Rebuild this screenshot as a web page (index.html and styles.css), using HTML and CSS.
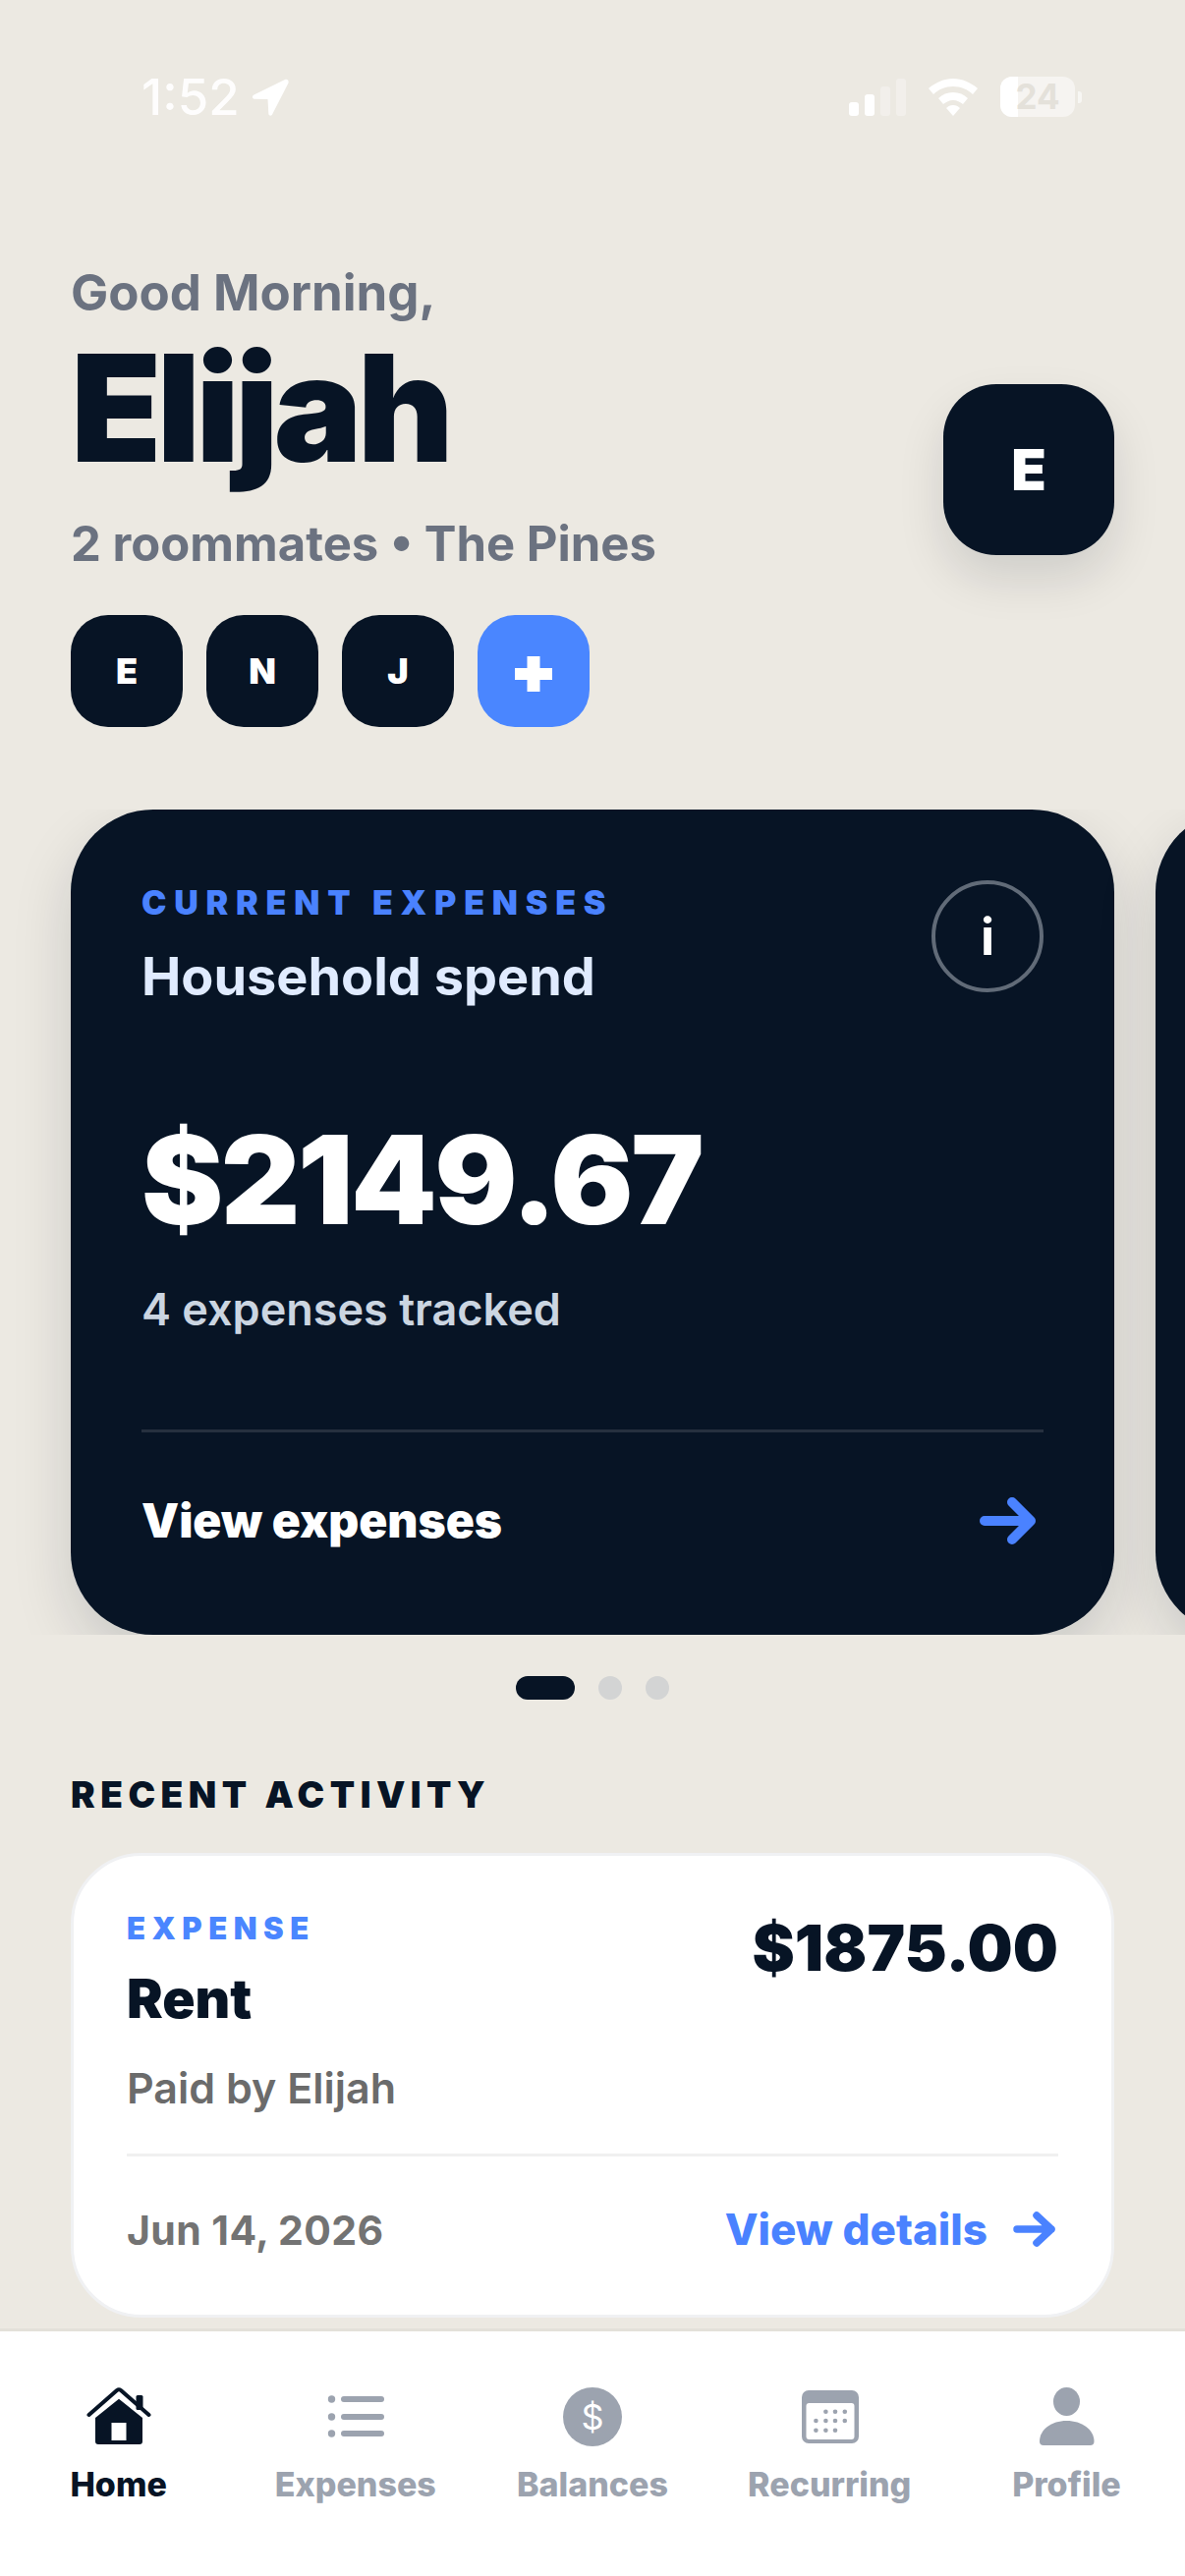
FILE: index.html
```html
<!DOCTYPE html>
<html lang="en">
<head>
<meta charset="utf-8">
<title>Home</title>
<link rel="stylesheet" href="styles.css">
</head>
<body>
<div class="app">
  <div class="status">
    <div class="status-left">
      <span class="time">1:52</span>
      <svg class="loc" viewBox="0 0 40 40"><path d="M35 2 3.500 17.500c-2.500 1.200-1.800 4.300.8 4.300l13.200.2.800 14.500c.1 2.600 3.300 3 4 .6L38.500 5.500c.8-2.400-1.300-4.400-3.500-3.500z" fill="#fff"/></svg>
    </div>
    <div class="status-right">
      <svg class="signal" viewBox="0 0 58 38"><rect x="0" y="24" width="10" height="14" rx="3" fill="#fff"/><rect x="16" y="16" width="10" height="22" rx="3" fill="#fff"/><rect x="32" y="8" width="10" height="30" rx="3" fill="#fff" opacity=".3"/><rect x="48" y="0" width="10" height="38" rx="3" fill="#fff" opacity=".3"/></svg>
      <svg class="wifi" viewBox="0 0 50 38"><path d="M25 0c9 0 18 4 25 10l-5 6c-5-5-12-8-20-8S10 11 5 16L0 10C7 4 16 0 25 0zM25 14c6 0 11 2 15 6l-5 6c-3-2-6-4-10-4s-7 2-10 4l-5-6c4-4 9-6 15-6zM25 27c3 0 5 1 7 3l-7 8-7-8c2-2 4-3 7-3z" fill="#fff"/></svg>
      <div class="battery"><div class="battery-fill"></div><span class="battery-num">24</span></div>
      <div class="battery-cap"></div>
    </div>
  </div>

  <main class="main">
    <header class="head">
      <div class="head-text">
        <div class="greet">Good Morning,</div>
        <h1 class="name">Elijah</h1>
        <div class="sub">2 roommates • The Pines</div>
        <div class="mates">
          <div class="mate">E</div>
          <div class="mate">N</div>
          <div class="mate">J</div>
          <div class="mate mate-add">
            <svg class="plus" viewBox="0 0 38 36"><path d="M12.500 0h13v12h12.500v12H25.500v12h-13V24H0V12h12.500z" fill="#fff"/></svg>
          </div>
        </div>
      </div>
      <div class="me">E</div>
    </header>

    <section class="carousel">
      <article class="hero">
        <div class="hero-top">
          <div>
            <div class="eyebrow">CURRENT EXPENSES</div>
            <div class="hero-title">Household spend</div>
          </div>
          <div class="info">i</div>
        </div>
        <div class="hero-amount">$2149.67</div>
        <div class="hero-note">4 expenses tracked</div>
        <div class="hero-foot">
          <span class="hero-link">View expenses</span>
          <svg class="arrow-lg" viewBox="0 0 58 48"><path d="M5 24h47M33 5l19 19-19 19" fill="none" stroke="#4a82ff" stroke-width="10" stroke-linecap="round" stroke-linejoin="round"/></svg>
        </div>
      </article>
      <article class="hero hero-next"></article>
    </section>

    <div class="dots"><span class="dot dot-on"></span><span class="dot"></span><span class="dot"></span></div>

    <h2 class="recent">RECENT ACTIVITY</h2>
    <article class="item">
      <div class="item-top">
        <div>
          <div class="item-tag">EXPENSE</div>
          <div class="item-title">Rent</div>
        </div>
        <div class="item-amount">$1875.00</div>
      </div>
      <div class="item-by">Paid by Elijah</div>
      <div class="item-foot">
        <span class="item-date">Jun 14, 2026</span>
        <span class="item-link">View details
          <svg class="arrow-sm" viewBox="0 0 44 36"><path d="M4 18h35M24 4l15 14-15 14" fill="none" stroke="#4a82ff" stroke-width="7.500" stroke-linecap="round" stroke-linejoin="round"/></svg>
        </span>
      </div>
    </article>
  </main>

  <nav class="tabs">
    <div class="tab tab-on">
      <svg class="tab-icon" viewBox="0 0 70 60"><path d="M4.500 28 33 3q2-1.500 4 0L65.500 28" fill="none" stroke="#071425" stroke-width="4" stroke-linecap="round" stroke-linejoin="round"/><rect x="52.500" y="8" width="7" height="15" rx="1.500" fill="#071425"/><path d="M35 11.700 59 31v24a3 3 0 0 1-3 3H14a3 3 0 0 1-3-3V31z" fill="#071425"/><rect x="27.500" y="36" width="15" height="18" fill="#fff"/></svg>
      <span>Home</span>
    </div>
    <div class="tab">
      <svg class="tab-icon" viewBox="0 0 70 60"><g fill="#9ca3af"><circle cx="10.500" cy="12" r="3.700"/><circle cx="10.500" cy="30" r="3.700"/><circle cx="10.500" cy="47" r="3.700"/><rect x="20" y="9" width="44" height="6" rx="3"/><rect x="20" y="27" width="44" height="6" rx="3"/><rect x="20" y="44" width="44" height="6" rx="3"/></g></svg>
      <span>Expenses</span>
    </div>
    <div class="tab">
      <div class="coin">$</div>
      <span>Balances</span>
    </div>
    <div class="tab">
      <svg class="tab-icon" viewBox="0 0 70 60"><rect x="7" y="3" width="58" height="54" rx="7" fill="#9ca3af"/><rect x="11.500" y="16" width="49" height="37" rx="3" fill="#fff"/><g fill="#9ca3af"><circle cx="31.400" cy="24.700" r="2.300"/><circle cx="41" cy="24.700" r="2.300"/><circle cx="50.800" cy="24.700" r="2.300"/><circle cx="21.400" cy="34" r="2.300"/><circle cx="31.400" cy="34" r="2.300"/><circle cx="41" cy="34" r="2.300"/><circle cx="50.800" cy="34" r="2.300"/><circle cx="21.400" cy="43.700" r="2.300"/><circle cx="31.400" cy="43.700" r="2.300"/><circle cx="41" cy="43.700" r="2.300"/></g></svg>
      <span>Recurring</span>
    </div>
    <div class="tab">
      <svg class="tab-icon" viewBox="0 0 70 60"><g fill="#9ca3af"><ellipse cx="35.500" cy="14.500" rx="13.500" ry="14.500"/><path d="M8 55C8 43 20 34 35.500 34S63.500 43 63.500 55q0 4-4 4H12q-4 0-4-4z"/></g></svg>
      <span>Profile</span>
    </div>
  </nav>
</div>
</body>
</html>
```
FILE: styles.css
```css
* { box-sizing: border-box; }
html, body { margin: 0; padding: 0; }
body { font-family: Inter, "Liberation Sans", sans-serif; background: #ece9e2; color: #071425; }
.app { width: 1206px; height: 2622px; display: flex; flex-direction: column; overflow: hidden; background: #ece9e2; }

.status { height: 150px; flex: none; display: flex; justify-content: space-between; align-items: flex-start; padding: 74px 105px 0 144px; color: #fff; }
.status-left { display: flex; align-items: center; gap: 11px; }
.time { font-size: 51px; line-height: 50px; font-weight: 500; opacity: .95; }
.loc { width: 40px; height: 40px; display: block; }
.status-right { display: flex; align-items: center; padding-top: 4px; }
.signal { width: 58px; height: 38px; margin-right: 23px; display: block; }
.wifi { width: 50px; height: 38px; margin-right: 23px; display: block; }
.battery { position: relative; width: 76px; height: 41px; border-radius: 12px; overflow: hidden; background: rgba(255,255,255,.5); }
.battery-fill { width: 18px; height: 100%; background: #fff; }
.battery-num { position: absolute; inset: 0; text-align: center; font-size: 35px; line-height: 41px; font-weight: 700; color: #e4e1da; }
.battery-cap { width: 4px; height: 12px; margin-left: 3px; background: rgba(255,255,255,.6); border-radius: 0 3px 3px 0; }

.main { flex: 1; min-height: 0; overflow: hidden; }
.head { display: flex; justify-content: space-between; align-items: flex-start; padding: 118px 72px 0; }
.greet { font-size: 51px; line-height: 60px; font-weight: 700; color: #6b7280; }
.name { margin: 7px 0 0; font-size: 151px; line-height: 160px; font-weight: 900; letter-spacing: -5px; color: #071425; }
.sub { margin-top: 29px; font-size: 49px; line-height: 60px; font-weight: 700; color: #6b7280; }
.mates { display: flex; gap: 24px; margin-top: 42px; }
.mate { width: 114px; height: 114px; border-radius: 38px; background: #071425; color: #fff; display: flex; align-items: center; justify-content: center; font-size: 36px; font-weight: 900; }
.mate-add { background: #4a86ff; }
.plus { width: 38px; height: 36px; display: block; margin-top: 6px; }
.me { width: 174px; height: 174px; margin-top: 123px; border-radius: 54px; background: #071425; color: #fff; display: flex; align-items: center; justify-content: center; font-size: 58px; font-weight: 900; box-shadow: 0 24px 48px rgba(7,20,37,.12); }

.carousel { display: flex; gap: 42px; padding: 0 72px; margin-top: 84px; height: 840px; overflow: hidden; }
.hero { flex: none; width: 1062px; height: 840px; border-radius: 84px; background: #071425; color: #fff; padding: 72px 72px 0; box-shadow: 0 24px 60px rgba(7,20,37,.15); }
.hero-next { width: 300px; }
.hero-top { display: flex; justify-content: space-between; align-items: flex-start; }
.eyebrow { margin-top: 3px; font-size: 34px; line-height: 40px; font-weight: 900; letter-spacing: 7.800px; color: #4a82ff; }
.hero-title { margin-top: 23px; font-size: 54px; line-height: 64px; font-weight: 750; color: #e0ebff; }
.info { width: 114px; height: 114px; border-radius: 50%; border: 4px solid #616b78; display: flex; align-items: center; justify-content: center; font-size: 52px; font-weight: 700; }
.hero-amount { margin-top: 105px; font-size: 125px; line-height: 140px; font-weight: 900; letter-spacing: -2.500px; color: #fff; }
.hero-note { margin-top: 35px; font-size: 45px; line-height: 54px; font-weight: 600; color: #cbd5e1; }
.hero-foot { margin-top: 95px; border-top: 3px solid #26303f; padding-top: 60px; display: flex; justify-content: space-between; align-items: center; }
.hero-link { font-size: 48px; line-height: 60px; font-weight: 900; }
.arrow-lg { width: 58px; height: 48px; margin-right: 7px; display: block; }

.dots { display: flex; justify-content: center; gap: 24px; margin-top: 42px; }
.dot { width: 24px; height: 24px; border-radius: 12px; background: #d3d4d4; }
.dot-on { width: 60px; background: #071425; }

.recent { margin: 75px 72px 0; font-size: 37px; line-height: 44px; font-weight: 900; letter-spacing: 5.500px; color: #071425; }
.item { margin: 37px 72px 0; height: 473px; padding: 56px 54px 0 54px; background: #fff; border: 3px solid #f0f1f3; border-radius: 72px; }
.item-top { display: flex; justify-content: space-between; align-items: flex-start; }
.item-tag { font-size: 31px; line-height: 36px; font-weight: 900; letter-spacing: 6.500px; color: #4a86ff; }
.item-title { margin-top: 21px; font-size: 55px; line-height: 64px; font-weight: 900; color: #071425; }
.item-amount { font-size: 65px; line-height: 72px; font-weight: 900; color: #071425; margin-top: 2px; }
.item-by { margin-top: 32px; font-size: 43px; line-height: 54px; font-weight: 600; color: #6b6b6b; }
.item-foot { margin-top: 40px; border-top: 3px solid #f0f0f0; padding-top: 48px; display: flex; justify-content: space-between; align-items: center; }
.item-date { padding-top: 2px; font-size: 41px; line-height: 50px; font-weight: 700; letter-spacing: .4px; color: #737373; }
.item-link { display: flex; align-items: center; gap: 26px; font-size: 44px; line-height: 50px; font-weight: 800; color: #4a82ff; }
.arrow-sm { width: 44px; height: 36px; display: block; margin-right: 2px; }

.tabs { flex: none; height: 252px; background: #fff; border-top: 3px solid #e3e0d9; display: flex; padding-top: 57px; }
.tab { flex: 1; display: flex; flex-direction: column; align-items: center; gap: 17px; font-size: 34px; line-height: 44px; font-weight: 800; color: #9ca3af; }
.tab-on { color: #071425; }
.tab-icon { width: 70px; height: 60px; display: block; }
.coin { width: 60px; height: 60px; border-radius: 50%; background: #9ca3af; color: #fff; display: flex; align-items: center; justify-content: center; font-size: 36px; font-weight: 400; }
```
